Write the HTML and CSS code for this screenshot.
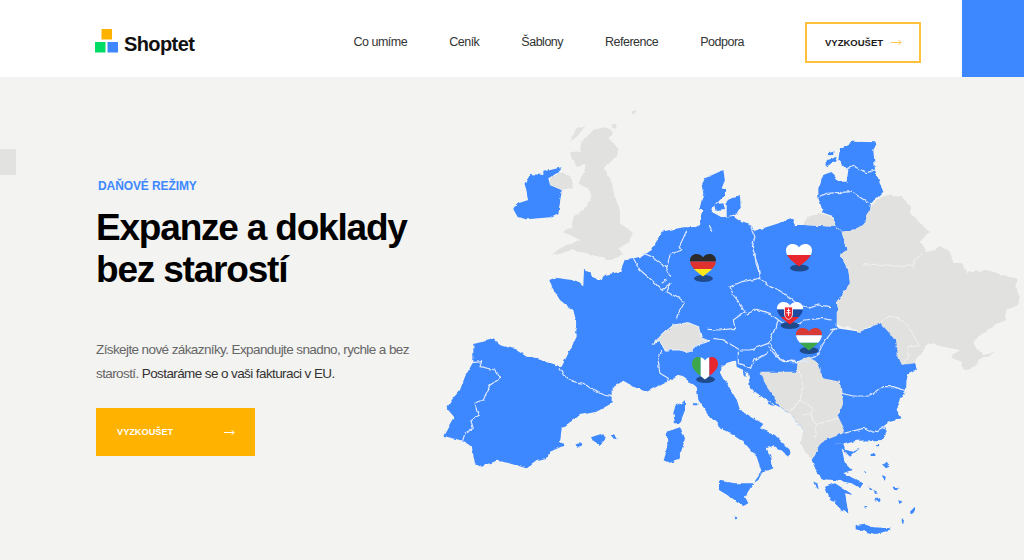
FILE: index.html
```html
<!DOCTYPE html>
<html lang="cs">
<head>
<meta charset="utf-8">
<title>Shoptet – Daňové režimy</title>
<link rel="stylesheet" href="styles.css">
</head>
<body>
<header class="header">
  <div class="header-main">
    <a class="logo" href="#">
      <svg class="logo-mark" viewBox="0 0 24 24" width="24" height="24" aria-hidden="true">
        <rect x="6.5" y="0" width="10.5" height="10.5" fill="#ffb200"/>
        <rect x="0" y="13" width="10.5" height="10.5" fill="#00dc64"/>
        <rect x="12.500" y="13" width="10.5" height="10.5" fill="#3d88ff"/>
      </svg>
      <span class="logo-text">Shoptet</span>
    </a>
    <nav class="nav">
      <a href="#">Co umíme</a>
      <a href="#">Ceník</a>
      <a href="#">Šablony</a>
      <a href="#">Reference</a>
      <a href="#">Podpora</a>
    </nav>
    <a class="btn-outline" href="#">
      <span>VYZKOUŠET</span>
      <svg class="arrow" viewBox="0 0 11 7" width="11" height="7" aria-hidden="true"><path d="M0 3.500H10M7.500 1L10 3.500L7.500 6" fill="none" stroke="currentColor"/></svg>
    </a>
  </div>
  <div class="header-block"></div>
</header>

<main class="hero">
  <div class="side-tab"></div>
  <section class="intro">
    <p class="eyebrow">DAŇOVÉ REŽIMY</p>
    <h1 class="title">Expanze a doklady bez starostí</h1>
    <p class="lead">Získejte nové zákazníky. Expandujte snadno, rychle a bez starostí. <strong>Postaráme se o vaši fakturaci v EU.</strong></p>
    <a class="btn-solid" href="#">
      <span>VYZKOUŠET</span>
      <svg class="arrow" viewBox="0 0 11 7" width="11" height="7" aria-hidden="true"><path d="M0 3.500H10M7.500 1L10 3.500L7.500 6" fill="none" stroke="currentColor"/></svg>
    </a>
  </section>

  <svg class="map" viewBox="440 110 584 440" width="584" height="440" role="img" aria-label="Mapa Evropy">
    <defs>
      <clipPath id="heart"><path d="M13 22.500C8 18.500 0 13.500 0 6.500C0 2.500 3 0 6.500 0C9.500 0 12 1.500 13 3.500C14 1.500 16.500 0 19.500 0C23 0 26 2.500 26 6.500C26 13.500 18 18.500 13 22.500Z"/></clipPath>
      <filter id="rough" filterUnits="userSpaceOnUse" x="440" y="110" width="584" height="440" color-interpolation-filters="sRGB">
        <feTurbulence type="fractalNoise" baseFrequency=".16" numOctaves="2" seed="4" result="n"/>
        <feDisplacementMap in="SourceGraphic" in2="n" scale="3.500" xChannelSelector="R" yChannelSelector="G"/>
      </filter>
    </defs>

    <g filter="url(#rough)">
    <!-- north-west -->
    <g transform="translate(440 110) scale(.33333)">
      <path class="land" d="M310 185L365 172L350 190L325 205L330 225L365 240L360 275L355 310L330 322L260 328L235 322L220 295L235 280L265 270L255 225L270 192L310 195Z"/>
      <path class="other" d="M330 205L365 185L395 205L398 235L365 240L330 225Z"/>
      <path class="other" d="M460 60L495 52L520 65L505 85L535 115L530 140L490 175L510 205L525 260L540 300L540 340L575 365L570 395L535 415L550 435L510 450L460 435L400 420L330 435L370 410L420 390L370 365L395 350L400 320L440 290L455 260L450 240L415 220L430 190L440 165L410 170L390 130L420 125L425 95Z"/>
      <path class="other" d="M390 90L410 55L438 45L420 70L395 95Z"/>
      <path class="other" d="M515 42L525 42L527 55L515 55Z"/>
      <path class="other" d="M575 0L590 0L582 16L575 12Z"/>
      <path class="land" d="M328 510L345 503L395 510L430 525L432 480L452 487L455 500L480 510L495 495L540 485L555 448L605 440L635 420L665 365L730 352L765 352L780 345L790 300L778 300L790 250L785 225L795 205L850 180L855 210L845 235L860 240L850 260L840 270L820 290L815 305L850 325L880 320L910 340L910 670L405 670L410 640L400 600L385 590L360 570L335 530Z"/>
      <path class="land" d="M825 282L850 280L855 300L830 303ZM845 322L880 318L882 335L850 340Z"/>
      <path class="line" d="M740 362L720 405L725 420L690 435L680 475L690 500M580 445L600 480L635 510L665 540L690 520L680 545L735 575L715 610L703 640M610 430L635 440L660 460L682 472M665 520L680 510M808 345L815 365"/>
    </g>

    <!-- north-east -->
    <g transform="translate(720 110) scale(.33333)">
      <path class="land" d="M20 270L60 258L62 290L50 310L20 320Z"/>
      <path class="land" d="M-10 350L70 338L90 345L105 362L160 345L215 327L225 345L250 345L345 350L365 365L380 420L360 435L385 480L390 520L350 575L355 600L335 630L360 665L-10 665Z"/>
      <path class="other" d="M262 322L300 308L345 325L345 350L250 345Z"/>
      <path class="land" d="M360 115L400 95L470 97L460 120L465 180L475 210L490 245L470 265L450 280L445 310L430 345L395 362L365 365L345 345L345 320L310 308L295 265L295 235L310 195L335 185L355 215L380 215L385 180L355 150Z"/>
      <path class="land" d="M328 125L340 122L340 135L322 136ZM320 150L350 140L345 152L320 170Z"/>
      <path class="line" d="M380 178L400 168L440 188L465 180M297 262L320 250L395 245L445 278M90 345L105 380L97 410L115 470L118 505"/>
      <path class="other" d="M450 290L490 255L545 260L570 290L570 310L630 365L600 395L610 435L660 410L690 425L695 455L740 490L800 480L880 505L900 580L700 640L365 650L335 630L355 600L350 575L390 520L385 480L360 435L380 420L365 365L395 362L430 345L445 310Z"/>
      <path class="line-soft" d="M385 475L410 460L480 470L580 470L590 440L610 430"/>
    </g>

    <!-- south-west -->
    <g transform="translate(440 320) scale(.33333)">
      <path class="land" d="M100 72L160 58L180 75L225 88L260 110L295 115L330 130L365 140L390 90L410 50L408 -5L905 -5L905 118L885 120L845 135L843 160L860 200L890 240L905 290L905 360L890 340L850 330L810 290L775 240L770 200L720 165L650 200L620 215L590 205L550 182L515 205L515 250L470 275L420 285L365 325L360 365L375 375L330 395L320 415L290 420L258 445L210 430L170 422L125 440L105 430L95 380L70 362L10 348L25 320L42 290L20 265L35 240L60 210L75 170L100 125Z"/>
      <path class="land" d="M735 240L735 270L720 310L705 310L700 280L705 258L725 250ZM680 335L720 322L735 355L725 390L715 420L690 428L672 420L682 375ZM453 352L490 340L498 355L480 378L460 365ZM512 345L525 342L533 358L520 355ZM405 375L420 367L428 372L412 383ZM758 250L772 250L772 256L760 256ZM884 590L892 592L888 598Z"/>
      <path class="line" d="M95 128L125 125L120 140L165 150L182 175L150 195L130 240L105 250L115 285L92 300L100 325L75 340L68 362M360 145L370 165L400 185L430 190L460 210L490 225L520 230M665 90L655 125L660 160L685 175L680 190"/>
      <path class="other-edge" d="M640 70L665 45L700 15L745 8L775 20L785 55L810 62L790 70L770 75L745 100L720 90L675 90L660 65Z"/>
    </g>

    <!-- south-east -->
    <g transform="translate(720 320) scale(.33333)">
      <path class="land" d="M-5 -30L350 -30L350 25L420 35L490 5L530 70L540 125L565 135L585 130L590 150L560 165L558 215L540 235L530 270L545 295L500 305L495 320L500 335L490 360L410 362L375 372L305 368L300 300L250 330L215 285L180 262L140 240L90 205L85 160L70 150L50 140L48 122L20 125L3 135L-5 100Z"/>
      <path class="land" d="M3 160L50 240L60 270L130 312L120 325L165 345L210 390L205 410L160 375L140 385L155 420L160 445L125 460L115 480L100 490L125 455L110 410L70 365L30 340L-5 320Z"/>
      <path class="land" d="M-3 482L45 490L100 490L75 530L85 550L70 558L30 530L-3 510Z"/>
      <path class="land" d="M305 365L370 372L375 390L400 395L420 385L390 410L365 385L375 430L395 450L370 460L430 490L420 505L395 490L345 480L305 478L290 455L275 420Z"/>
      <path class="land" d="M315 500L345 490L400 525L375 520L385 580L360 570L345 545L330 540Z"/>
      <path class="land" d="M407 615L430 612L460 622L515 625L510 632L465 642L407 628ZM570 575L585 560L585 570L575 588ZM485 435L500 425L512 440L495 445ZM487 465L497 470L495 485L488 480ZM452 402L466 400L466 408L452 408ZM465 376L475 374L475 382L466 382ZM518 500L536 502L530 508L520 506ZM535 540L548 545L538 552ZM463 537L480 535L482 545L468 545ZM545 596L552 596L550 612L546 610ZM432 558L442 558L438 563ZM280 485L292 490L296 508L288 505ZM95 205L105 215L100 218ZM145 243L165 258L150 255ZM44 590L52 594L47 599ZM432 452L440 455L436 460ZM445 498L458 510L450 510ZM460 512L474 520L466 522ZM70 150L78 155L76 172L70 165Z"/>
      <path class="line" d="M365 220L400 228L450 228L490 200L520 200L558 212M372 340L430 325L460 340L490 320L495 330M150 70L180 120L230 125L290 110L310 70L340 30L352 25M330 30L350 25"/>
      <path class="other" d="M120 155L230 155L232 125L265 110L290 125L310 175L360 185L365 220L370 250L355 290L372 325L370 340L305 365L275 420L255 395L243 370L250 330L215 285L180 260L140 200Z"/>
      <path class="line-soft" d="M240 155L250 200L240 240L215 270M240 240L280 265L270 285L290 315L285 350M290 310L355 295M250 285L275 280"/>
    </g>

    <!-- centre borders -->
    <g transform="translate(680 240) scale(.33333)">
      <path class="line" d="M240 115L185 125L150 140L160 165L180 190L195 215L160 240L165 265L120 270L80 268M240 115L270 140L295 150L320 165L350 190L385 205L415 195L450 200M195 225L230 208L270 220L295 240L275 290L265 312M100 295L130 300L180 330L210 330L265 310M175 335L175 370L215 385L225 360L265 335M265 320L290 350L320 365L350 365L385 365M295 240L330 265L375 240L425 235L455 240M225 40L228 70L235 90L240 115"/>
    </g>

    <!-- Ukraine and Moldova -->
    <g transform="translate(860 240) scale(.33333)">
      <path class="other" d="M-30 0L180 0L190 20L205 40L240 18L270 35L280 68L305 70L320 98L380 90L400 105L470 115L465 140L480 170L470 195L440 210L435 240L400 258L345 300L340 310L370 345L405 335L385 350L370 350L330 390L310 390L305 365L270 352L300 330L240 318L205 310L175 350L165 370L125 375L110 340L105 300L80 270L60 248L10 268L0 275L-30 262Z"/>
      <path class="land" d="M125 375L165 370L170 390L145 395L140 420L110 420L110 340Z"/>
      <path class="line-soft" d="M60 245L90 228L130 240L150 265L165 295L180 318L145 320L143 350L130 372M160 85L165 55L190 42M10 70L70 78L160 78"/>
    </g>
    </g>

    <!-- flags -->
    <g transform="translate(690 254)">
      <ellipse class="pin" cx="13.500" cy="24.500" rx="9.500" ry="3.500"/>
      <g clip-path="url(#heart)"><rect width="26" height="7.500" fill="#2b2b2b"/><rect y="7.500" width="26" height="7.500" fill="#e0312f"/><rect y="15" width="26" height="8" fill="#ffe81a"/></g>
    </g>
    <g transform="translate(786 244)">
      <ellipse class="pin" cx="13.500" cy="24" rx="9.500" ry="3.500"/>
      <g clip-path="url(#heart)"><rect width="26" height="11" fill="#fff"/><rect y="11" width="26" height="12" fill="#e8262d"/></g>
    </g>
    <g transform="translate(777 302)">
      <ellipse class="pin" cx="13" cy="23.500" rx="9.500" ry="3.500"/>
      <g clip-path="url(#heart)">
        <rect width="26" height="7.500" fill="#fff"/><rect y="7.500" width="26" height="7.500" fill="#1c4aa0"/><rect y="15" width="26" height="8" fill="#e8262d"/>
        <path d="M7.500 5H15.500V12C15.500 15 13.500 16.500 11.500 17.500C9.500 16.500 7.500 15 7.500 12Z" fill="#e8262d" stroke="#fff" stroke-width=".8"/>
        <path d="M11.500 6.500V14M9.800 8.500H13.200M9.200 10.800H13.800" stroke="#fff" fill="none"/>
      </g>
    </g>
    <g transform="translate(796 328)">
      <ellipse class="pin" cx="13" cy="22.500" rx="9.500" ry="3.500"/>
      <g clip-path="url(#heart)"><rect width="26" height="7.300" fill="#d83a36"/><rect y="7.300" width="26" height="7.500" fill="#fff"/><rect y="14.800" width="26" height="8" fill="#3ea64a"/></g>
    </g>
    <g transform="translate(692 357)">
      <ellipse class="pin" cx="13.500" cy="22.500" rx="9.500" ry="3.500"/>
      <g clip-path="url(#heart)"><rect width="8.700" height="23" fill="#3ea64a"/><rect x="8.700" width="8.700" height="23" fill="#fff"/><rect x="17.400" width="8.600" height="23" fill="#e8262d"/></g>
    </g>
  </svg>
</main>
</body>
</html>
```

FILE: styles.css
```css
* { box-sizing: border-box; }

html, body {
  margin: 0;
  height: 100%;
  overflow: hidden;
}

body {
  font-family: "Liberation Sans", Arial, sans-serif;
  background: #f3f3f2;
  color: #000;
  display: flex;
  flex-direction: column;
}

a { text-decoration: none; color: inherit; }

.header {
  height: 77px;
  flex: none;
  background: #fff;
  display: flex;
}

.header-main {
  flex: 1;
  display: flex;
  align-items: center;
  padding: 7px 41px 0 95px;
}

.logo {
  display: flex;
  align-items: center;
  gap: 5px;
  margin-top: -2px;
}

.logo-mark { display: block; }

.logo-text {
  font-size: 20px;
  font-weight: 700;
  letter-spacing: -.6px;
  line-height: 24px;
  margin-top: 6px;
  color: #111;
}

.nav {
  margin-left: auto;
  margin-right: 61px;
  display: flex;
  gap: 42px;
  font-size: 12.500px;
  letter-spacing: -.5px;
  color: #333;
  padding-bottom: 1px;
  margin-top: 1px;
}

.btn-outline {
  width: 116px;
  height: 41px;
  border: 2px solid #ffc13b;
  display: flex;
  align-items: center;
  justify-content: space-between;
  padding: 0 17px 0 18px;
  font-size: 9.500px;
  font-weight: 700;
  color: #1a1a1a;
}

.btn-outline .arrow { color: #ffc752; }

.header-block {
  width: 62px;
  background: #3d88ff;
  flex: none;
}

.hero {
  flex: 1;
  position: relative;
  display: flex;
  align-items: flex-start;
}

.side-tab {
  position: absolute;
  left: 0;
  top: 72px;
  width: 16px;
  height: 26px;
  background: #e2e3e0;
}

.intro {
  width: 440px;
  flex: none;
  padding: 101px 0 0 96px;
}

.eyebrow {
  margin: 0 0 13px 2px;
  font-size: 12px;
  line-height: 16px;
  font-weight: 700;
  letter-spacing: -.1px;
  color: #3d88ff;
}

.title {
  margin: 0;
  width: 320px;
  font-size: 37px;
  line-height: 42px;
  font-weight: 700;
  letter-spacing: -1.2px;
  color: #000;
}

.lead {
  margin: 47px 0 23px;
  width: 320px;
  font-size: 13.500px;
  line-height: 23.500px;
  letter-spacing: -.6px;
  color: #666;
}

.lead strong {
  font-weight: 400;
  color: #333;
}

.btn-solid {
  width: 159px;
  height: 48px;
  display: flex;
  align-items: center;
  justify-content: space-between;
  padding: 0 20px 0 21px;
  background: #ffb200;
  color: #fff;
  font-size: 9.200px;
  font-weight: 700;
}

.map {
  display: block;
  flex: none;
  margin-top: 33px;
}

.land { fill: #3d88ff; }

.other { fill: #e1e2df; }

.other-edge {
  fill: #e1e2df;
  stroke: #eef3fb;
  stroke-width: 3;
}

.line {
  fill: none;
  stroke: #e0eaff;
  stroke-width: 3.500;
  stroke-linejoin: round;
}

.line-soft {
  fill: none;
  stroke: #f1f1ef;
  stroke-width: 3;
  stroke-linejoin: round;
}

.pin { fill: #1f4a8c; }
```
